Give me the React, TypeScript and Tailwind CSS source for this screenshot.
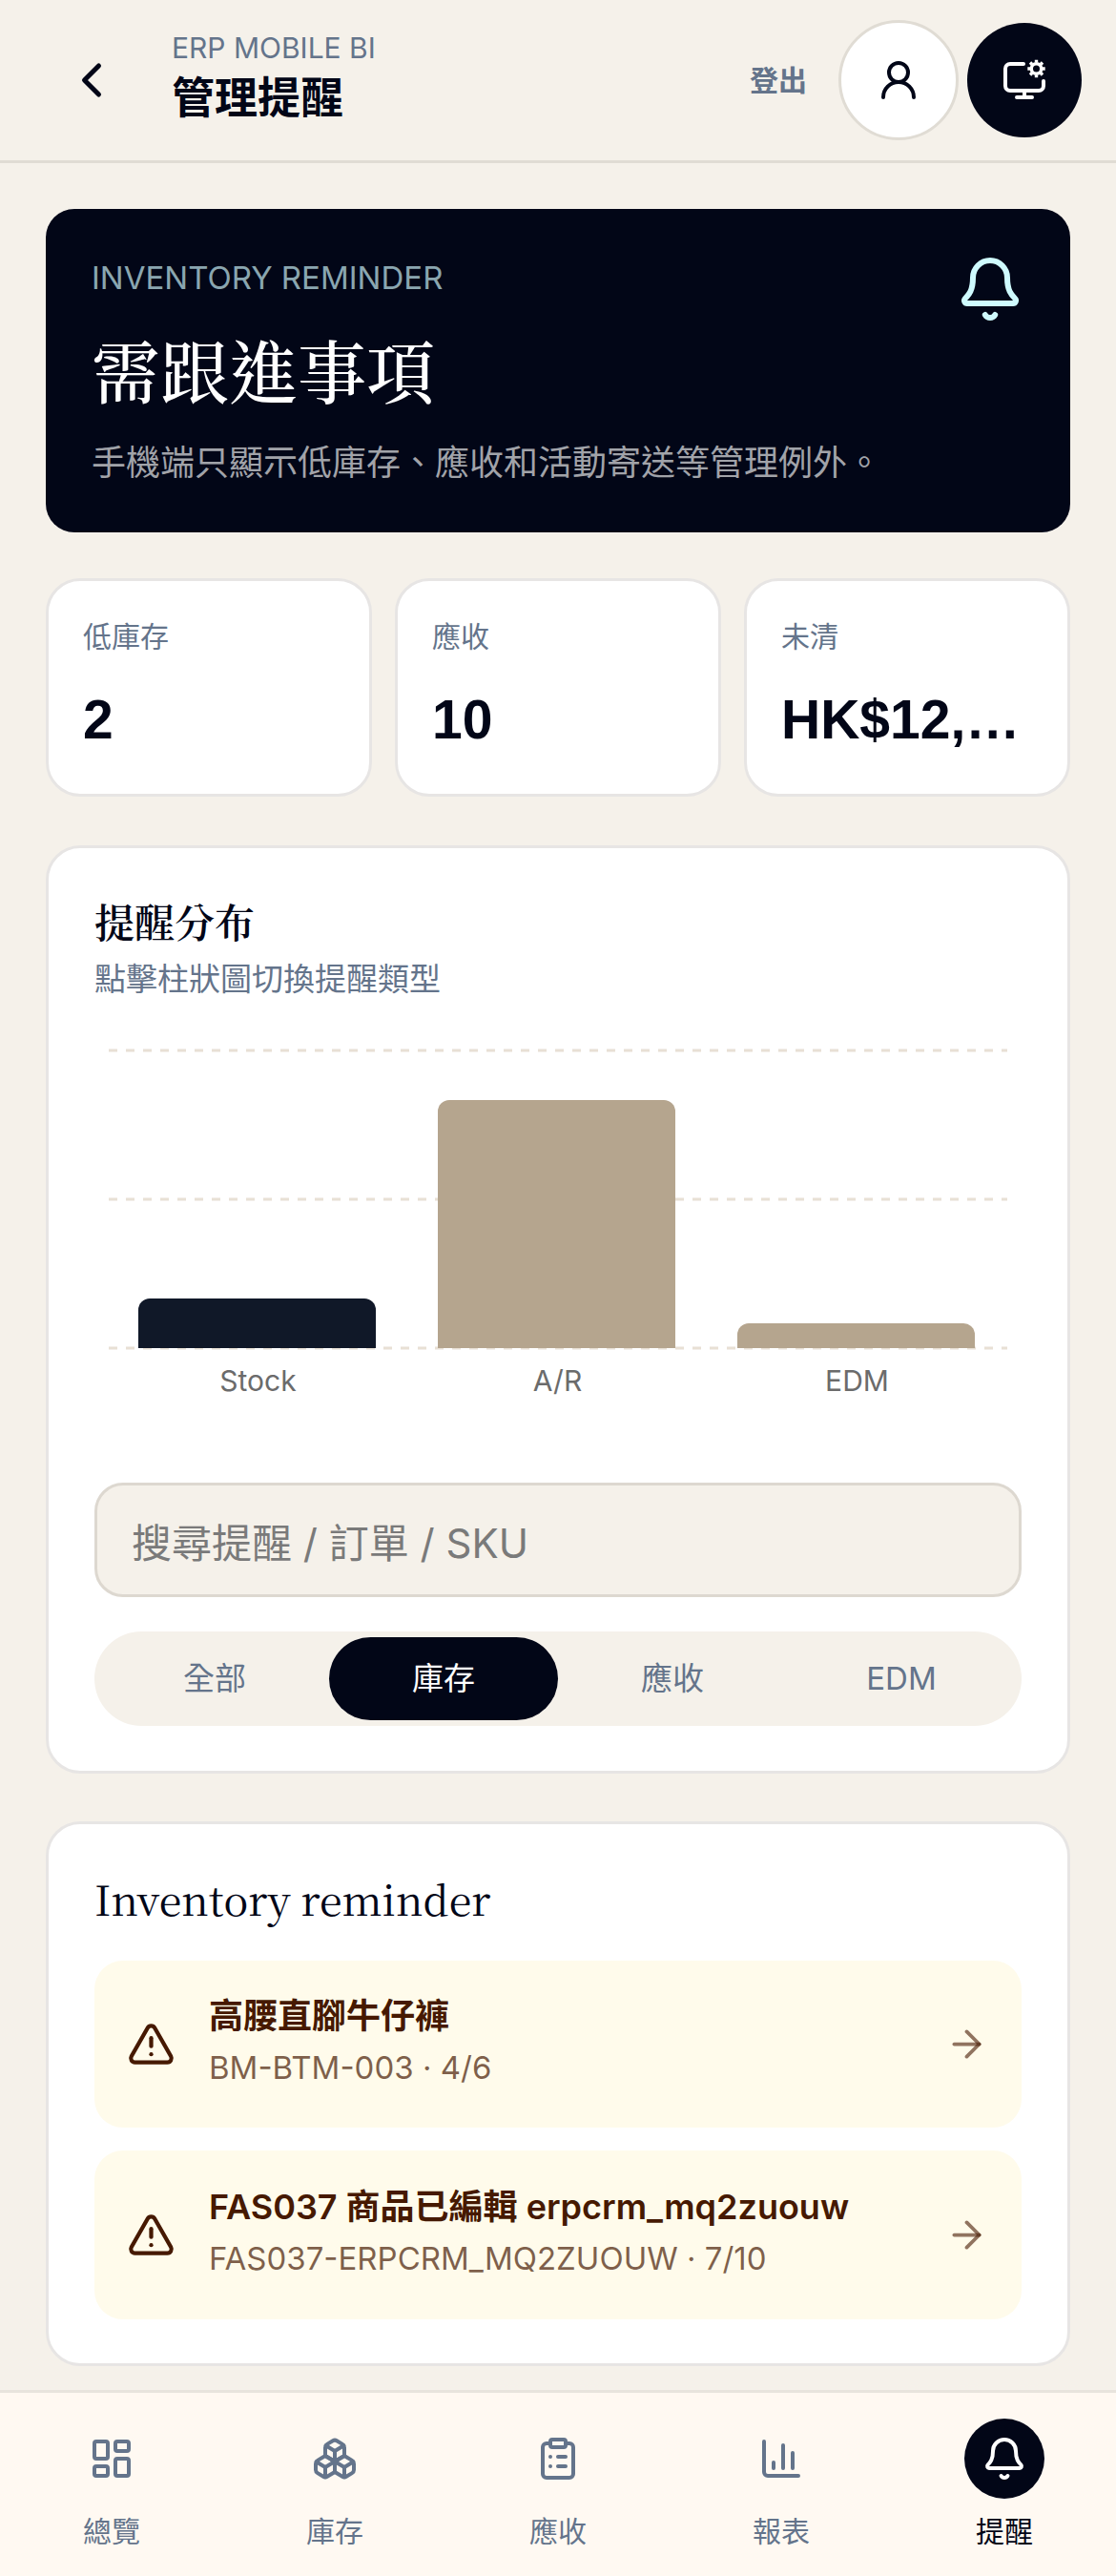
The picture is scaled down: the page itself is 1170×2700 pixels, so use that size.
import { ArrowRight, Bell, Boxes, ChartColumn, ChevronLeft, ClipboardList, LayoutDashboard, TriangleAlert, UserRound } from "lucide-react";

const sans = "font-['Inter','Noto_Sans_CJK_TC',sans-serif]";
const serif = "font-['Noto_Serif_CJK_TC','Source_Serif_4','Noto_Serif','Liberation_Serif',serif]";

function MonitorCog() {
  return (
    <svg width="48" height="48" viewBox="0 0 24 24" fill="none" stroke="currentColor" strokeWidth="2" strokeLinecap="round" strokeLinejoin="round">
      <path d="M11.5 3.5H4.5a2.5 2.5 0 0 0-2.5 2.5v9a2.5 2.5 0 0 0 2.5 2.5h15a2.5 2.5 0 0 0 2.5-2.5v-2.5" />
      <path d="M12 17.5V21M8 21h8" />
      <circle cx="18.25" cy="6" r="2.6" strokeWidth="1.7" />
      <path
        d="M18.25 1.4v1.4M18.25 9.2v1.4M13.65 6h1.4M21.45 6h1.4M15 2.75l1 1M20.5 8.25l1 1M15 9.25l1-1M20.5 3.75l1-1"
        strokeWidth="1.7"
        strokeLinecap="butt"
      />
    </svg>
  );
}

function Stat({ label, value }: { label: string; value: string }) {
  return (
    <div className="min-w-0 h-[229px] rounded-[36px] border-[3px] border-[#e7e5e4] bg-white px-[36px] pt-[36px]">
      <div className="text-[30px] leading-[45px] text-[#64748b]">{label}</div>
      <div className="mt-[22px] whitespace-nowrap font-['Liberation_Sans',sans-serif] text-[57px] leading-[84px] font-bold text-[#020617]">{value}</div>
    </div>
  );
}

function Chart() {
  const bars = [
    { x: 46, w: 249, top: 271, fill: "#101828", label: "Stock" },
    { x: 360, w: 249, top: 63, fill: "#b5a58e", label: "A/R" },
    { x: 674, w: 249, top: 297, fill: "#b5a58e", label: "EDM" },
  ];
  return (
    <svg width="972" height="390" viewBox="0 0 972 390" className="mt-[40px] block">
      {[11, 167, 323].map((y) => (
        <line key={y} x1="15" x2="957" y1={y} y2={y} stroke="#e8e0d5" strokeWidth="3" strokeDasharray="9 9" />
      ))}
      {bars.map((b) => (
        <g key={b.label}>
          <path
            d={`M${b.x} 323V${b.top + 12}a12 12 0 0 1 12-12h${b.w - 24}a12 12 0 0 1 12 12V323Z`}
            fill={b.fill}
          />
          <text x={b.x + b.w / 2 + 1} y="368" textAnchor="middle" fontSize="30" fill="#6b6b6b" fontFamily="Inter, sans-serif">
            {b.label}
          </text>
        </g>
      ))}
    </svg>
  );
}

function Reminder({ title, sub, pad }: { title: string; sub: string; pad: string }) {
  return (
    <div className={`flex items-center rounded-[30px] bg-[#fffbeb] pl-[34px] pr-[35px] ${pad} text-[#461901]`}>
      <TriangleAlert size={51} strokeWidth={2} className="shrink-0" />
      <div className="ml-[35px] min-w-0 flex-1 -translate-y-[4px]">
        <div className="text-[36px] leading-[54px] font-semibold">{title}</div>
        <div className="mt-[3px] text-[33px] leading-[48px] text-[#461901]/70">{sub}</div>
      </div>
      <ArrowRight size={45} strokeWidth={2} className="shrink-0 text-[#461901]/60" />
    </div>
  );
}

function NavItem({ label, icon, active }: { label: string; icon: React.ReactNode; active?: boolean }) {
  return (
    <div className={`flex flex-col items-center ${active ? "text-[#020617]" : "text-[#64748b]"}`}>
      <div className={`flex h-[84px] w-[84px] items-center justify-center rounded-full ${active ? "bg-[#020617] text-white" : ""}`}>
        {icon}
      </div>
      <div className="mt-[12px] text-[30px] leading-[45px]">{label}</div>
    </div>
  );
}

export default function App() {
  return (
    <div className={`flex h-[2700px] w-[1170px] flex-col overflow-hidden bg-[#f5f1ea] ${sans}`}>
      <header className="flex h-[171px] shrink-0 items-center border-b-[3px] border-[#e0dcd4] px-[36px]">
        <div className="flex h-[120px] w-[120px] shrink-0 items-center justify-center text-[#020617]">
          <ChevronLeft size={60} strokeWidth={2} />
        </div>
        <div className="ml-[24px] flex-1">
          <div className="-mt-[3px] text-[30px] leading-[36px] text-[#64748b]">ERP MOBILE BI</div>
          <div className="mt-[5px] text-[45px] leading-[60px] font-bold text-[#020617]">管理提醒</div>
        </div>
        <div className="text-[30px] font-semibold text-[#64748b]">登出</div>
        <div className="ml-[33px] flex h-[126px] w-[126px] items-center justify-center rounded-full border-[3px] border-[#e0dcd4] bg-white text-[#020617]">
          <UserRound size={48} strokeWidth={2} />
        </div>
        <div className="ml-[9px] flex h-[120px] w-[120px] items-center justify-center rounded-full bg-[#020617] text-white">
          <MonitorCog />
        </div>
      </header>

      <main className="flex-1 px-[48px] pt-[48px]">
        <section className="relative h-[339px] rounded-[30px] bg-[#020617] px-[48px] pt-[48px]">
          <div className="text-[33px] leading-[48px] text-[#8aa6b0]">INVENTORY REMINDER</div>
          <div className={`mt-[26px] text-[72px] leading-[90px] font-medium text-white ${serif}`}>需跟進事項</div>
          <div className="mt-[27px] text-[36px] leading-[54px] text-[#a1a3a9]">手機端只顯示低庫存、應收和活動寄送等管理例外。</div>
          <Bell size={72} strokeWidth={2} className="absolute top-[48px] right-[48px] text-[#cffafe]" />
        </section>

        <section className="mt-[48px] grid grid-cols-3 gap-[24px]">
          <Stat label="低庫存" value="2" />
          <Stat label="應收" value="10" />
          <Stat label="未清" value="HK$12,…" />
        </section>

        <section className="mt-[51px] h-[973px] rounded-[36px] border-[3px] border-[#e7e5e4] bg-white px-[48px] pt-[48px]">
          <div className={`-mt-[2px] text-[42px] leading-[60px] font-semibold text-[#020617] ${serif}`}>提醒分布</div>
          <div className="mt-[7px] text-[33px] leading-[48px] text-[#64748b]">點擊柱狀圖切換提醒類型</div>
          <Chart />
          <input
            placeholder="搜尋提醒 / 訂單 / SKU"
            className="mt-[74px] box-border block h-[120px] w-full rounded-[30px] border-[3px] border-[#ddd8d0] bg-[#f5f1ea] px-[36px] pt-[6px] text-[42px] outline-none placeholder:text-[#7a7a7a]"
          />
          <div className="mt-[36px] grid h-[99px] grid-cols-4 rounded-full bg-[#f5f1ea] p-[6px] text-[33px] text-[#64748b]">
            <div className="flex items-center justify-center rounded-full">全部</div>
            <div className="flex items-center justify-center rounded-full bg-[#020617] text-white">庫存</div>
            <div className="flex items-center justify-center rounded-full">應收</div>
            <div className="flex items-center justify-center rounded-full">EDM</div>
          </div>
        </section>

        <section className="mt-[50px] h-[571px] rounded-[36px] border-[3px] border-[#e7e5e4] bg-white px-[48px] pt-[47px]">
          <div className={`text-[43.2px] leading-[60px] text-[#020617] ${serif}`}>Inventory reminder</div>
          <div className="mt-[36px] flex flex-col gap-[24px]">
            <Reminder title="高腰直腳牛仔褲" sub="BM-BTM-003 · 4/6" pad="py-[35px]" />
            <Reminder title="FAS037 商品已編輯 erpcrm_mq2zuouw" sub="FAS037-ERPCRM_MQ2ZUOUW · 7/10" pad="py-[36px]" />
          </div>
        </section>
      </main>

      <nav className="grid h-[195px] shrink-0 grid-cols-5 border-t-[3px] border-[#e8e4dd] bg-[#fff9f2] pt-[27px]">
        <NavItem label="總覽" icon={<LayoutDashboard size={48} strokeWidth={2} />} />
        <NavItem label="庫存" icon={<Boxes size={48} strokeWidth={2} />} />
        <NavItem label="應收" icon={<ClipboardList size={48} strokeWidth={2} />} />
        <NavItem label="報表" icon={<ChartColumn size={48} strokeWidth={2} />} />
        <NavItem label="提醒" icon={<Bell size={48} strokeWidth={2} />} active />
      </nav>
    </div>
  );
}
